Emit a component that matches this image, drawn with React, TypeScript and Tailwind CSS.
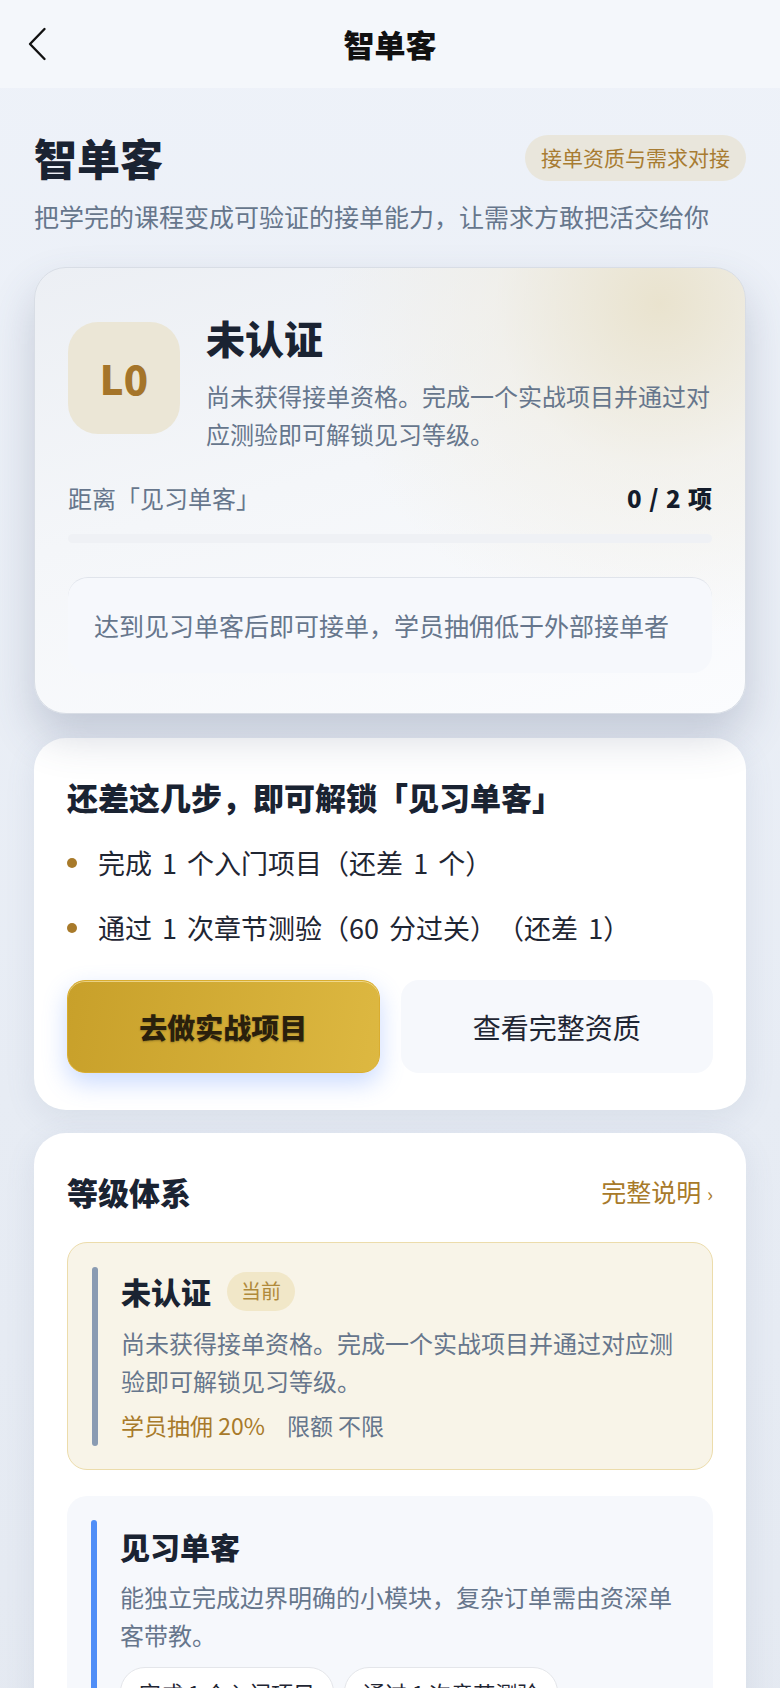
const steps = ["完成 1 个入门项目（还差 1 个）", "通过 1 次章节测验（60 分过关）（还差 1）"];

function BackIcon() {
  return (
    <svg width="20" height="34" viewBox="0 0 20 34" fill="none">
      <path d="M17.5 2L3 17L17.5 32" stroke="#111" strokeWidth="2.4" strokeLinecap="round" strokeLinejoin="round" />
    </svg>
  );
}

function HeroCard() {
  return (
    <div className="relative z-10 mt-[31px] rounded-[32px] border-[1.5px] border-[#d8dde5] bg-[radial-gradient(circle_at_88%_8%,rgba(233,226,204,0.95),rgba(240,236,224,0.5)_22%,transparent_45%),linear-gradient(165deg,#eceff4_0%,#f4f6f9_45%,#fbfcfe_100%)] px-[33px] pt-[44px] pb-[40px] shadow-[0_22px_44px_rgba(70,85,115,0.24)]">
      <div className="flex items-start gap-[26px]">
        <div className="mt-[10px] flex h-[112px] w-[112px] shrink-0 items-center justify-center rounded-[30px] bg-[#ebe6d6] text-[40px] font-black text-[#a5752a]">
          L0
        </div>
        <div className="min-w-0 flex-1">
          <div className="text-[39px] font-black leading-[51px] text-[#1a2332]">未认证</div>
          <p className="mt-[14px] text-[24px] leading-[38px] text-[#66768c]">
            尚未获得接单资格。完成一个实战项目并通过对应测验即可解锁见习等级。
          </p>
        </div>
      </div>

      <div className="mt-[27px] flex items-center justify-between text-[24px] leading-[36px]">
        <span className="text-[#66768c]">距离「见习单客」</span>
        <span className="font-black text-[#141c2b] [word-spacing:2px]">0 / 2 项</span>
      </div>
      <div className="mt-[18px] h-[9px] rounded-full bg-[#eff1f5]" />

      <div className="mt-[34px] flex h-[96px] items-center rounded-[20px] border-t-[1.5px] border-[#e0e4eb] bg-[#f6f8fc] px-[26px] text-[25px] text-[#66768c]">
        达到见习单客后即可接单，学员抽佣低于外部接单者
      </div>
    </div>
  );
}

function StepsCard() {
  return (
    <div className="mt-[24px] rounded-[32px] bg-white px-[33px] pt-[38px] pb-[37px] shadow-[0_8px_30px_rgba(110,125,155,0.12)]">
      <h2 className="text-[31px] font-black leading-[42px] text-[#1a2332]">还差这几步，即可解锁「见习单客」</h2>
      <ul className="mt-[25px] flex flex-col gap-[26px]">
        {steps.map((s) => (
          <li key={s} className="flex items-center gap-[21px] text-[27px] leading-[39px] text-[#1f2633] [word-spacing:4px]">
            <span className="h-[10px] w-[10px] shrink-0 rounded-full bg-[#a87a2a]" />
            {s}
          </li>
        ))}
      </ul>
      <div className="mt-[33px] grid h-[93px] grid-cols-2 gap-[21px]">
        <button className="rounded-[18px] border border-[#d9ad30] bg-[linear-gradient(100deg,#c8a02a,#ddb841)] text-[28px] font-black text-[#2a200c] shadow-[0_10px_24px_rgba(90,140,255,0.32),inset_0_1px_0_rgba(255,240,190,0.6)] [text-shadow:0_1px_2px_rgba(0,0,0,0.25)]">
          去做实战项目
        </button>
        <button className="rounded-[18px] bg-[#f6f8fc] text-[28px] text-[#1f2633]">查看完整资质</button>
      </div>
    </div>
  );
}

function LevelCard() {
  return (
    <div className="mt-[23px] rounded-t-[32px] bg-white px-[33px] pt-[38px] pb-[40px] shadow-[0_8px_30px_rgba(110,125,155,0.12)]">
      <div className="flex items-center justify-between">
        <h2 className="text-[31px] font-black leading-[42px] text-[#1a2332]">等级体系</h2>
        <span className="text-[25px] text-[#a87a2a]">
          完整说明 <span className="text-[20px]">›</span>
        </span>
      </div>

      <div className="mt-[29px] flex gap-[23px] rounded-[20px] border-[1.5px] border-[#ecdcab] bg-[#f8f4e8] px-[24px] py-[23.5px]">
        <div className="w-[6px] shrink-0 rounded-full bg-[#8a9bb2]" />
        <div className="min-w-0 flex-1 pt-[5px] pb-[4px]">
          <div className="flex items-center gap-[16px]">
            <span className="text-[30px] font-black leading-[39px] text-[#1a2332]">未认证</span>
            <span className="flex h-[39px] items-center rounded-full bg-[#f1e7c8] px-[14px] text-[20px] text-[#b08a3a]">当前</span>
          </div>
          <p className="mt-[13.5px] text-[24px] leading-[38px] text-[#66768c]">
            尚未获得接单资格。完成一个实战项目并通过对应测验即可解锁见习等级。
          </p>
          <div className="mt-[8.5px] flex gap-[22px] text-[23px] leading-[33px]">
            <span className="text-[#a87a2a]">学员抽佣 20%</span>
            <span className="text-[#66768c]">限额 不限</span>
          </div>
        </div>
      </div>

      <div className="mt-[26px] flex gap-[23px] rounded-[20px] bg-[#f6f8fc] px-[24px] py-[24px]">
        <div className="w-[6px] shrink-0 rounded-full bg-[#4f8ef7]" />
        <div className="min-w-0 flex-1 pt-[6.5px]">
          <div className="text-[30px] font-black leading-[39px] text-[#1a2332]">见习单客</div>
          <p className="mt-[12.5px] text-[24px] leading-[38px] text-[#66768c]">
            能独立完成边界明确的小模块，复杂订单需由资深单客带教。
          </p>
          <div className="mt-[13px] flex flex-wrap gap-[10px]">
            <span className="flex h-[50px] items-center rounded-full border-[1.5px] border-[#e4e6ea] bg-white px-[18px] text-[22px] text-[#1f2633]">
              完成 1 个入门项目
            </span>
            <span className="flex h-[50px] items-center rounded-full border-[1.5px] border-[#e4e6ea] bg-white px-[18px] text-[22px] text-[#1f2633]">
              通过 1 次章节测验
            </span>
          </div>
          <div className="mt-[10px] flex gap-[22px] text-[23px] leading-[33px]">
            <span className="text-[#a87a2a]">学员抽佣 15%</span>
            <span className="text-[#66768c]">限额 ¥2000/单</span>
          </div>
        </div>
      </div>
    </div>
  );
}

export default function App() {
  return (
    <div className="min-h-screen bg-[linear-gradient(180deg,#eef2f9_0%,#e7ecf4_60%,#e4e9f1_100%)] font-['Noto_Sans_CJK_SC',sans-serif] [text-spacing-trim:space-all]">
      <header className="grid h-[88px] grid-cols-[90px_1fr_90px] items-center bg-[#f4f7fb]">
        <div className="pl-[27px]">
          <BackIcon />
        </div>
        <div className="text-center text-[31px] font-black text-[#111]">智单客</div>
        <div />
      </header>

      <main className="px-[34px] pt-[41px]">
        <div className="flex items-center justify-between">
          <h1 className="text-[43px] font-black leading-[57px] text-[#1a2332]">智单客</h1>
          <span className="flex h-[46px] items-center rounded-full bg-[#e9e6dc] px-[16px] text-[21px] text-[#a87c32]">
            接单资质与需求对接
          </span>
        </div>
        <p className="mt-[10px] text-[25px] leading-[40px] text-[#66768c]">
          把学完的课程变成可验证的接单能力，让需求方敢把活交给你
        </p>

        <HeroCard />
        <StepsCard />
        <LevelCard />
      </main>
    </div>
  );
}
